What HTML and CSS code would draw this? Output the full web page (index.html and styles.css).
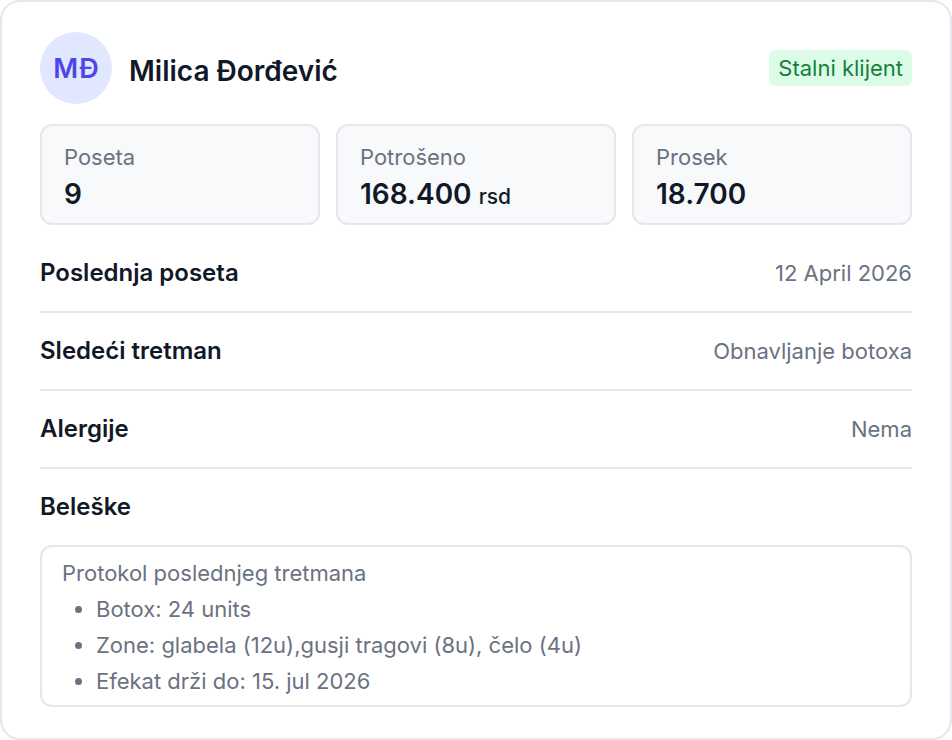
FILE: index.html
```html
<!DOCTYPE html>
<html lang="sr">
<head>
<meta charset="utf-8">
<title>Klijent</title>
<link rel="stylesheet" href="styles.css">
</head>
<body>
<div class="card">
  <div class="header">
    <div class="who">
      <div class="avatar">MĐ</div>
      <div class="name">Milica Đorđević</div>
    </div>
    <span class="badge">Stalni klijent</span>
  </div>
  <div class="stats">
    <div class="stat">
      <div class="stat-label">Poseta</div>
      <div class="stat-value">9</div>
    </div>
    <div class="stat">
      <div class="stat-label">Potrošeno</div>
      <div class="stat-value">168.400 <span class="unit">rsd</span></div>
    </div>
    <div class="stat">
      <div class="stat-label">Prosek</div>
      <div class="stat-value">18.700</div>
    </div>
  </div>
  <div class="row">
    <div class="row-label">Poslednja poseta</div>
    <div class="row-value">12 April 2026</div>
  </div>
  <div class="row">
    <div class="row-label">Sledeći tretman</div>
    <div class="row-value">Obnavljanje botoxa</div>
  </div>
  <div class="row">
    <div class="row-label">Alergije</div>
    <div class="row-value">Nema</div>
  </div>
  <div class="notes">
    <div class="row-label">Beleške</div>
    <div class="notes-box">
      <div class="notes-title">Protokol poslednjeg tretmana</div>
      <ul class="notes-list">
        <li>Botox: 24 units</li>
        <li>Zone: glabela (12u),gusji tragovi (8u), čelo (4u)</li>
        <li>Efekat drži do: 15. jul 2026</li>
      </ul>
    </div>
  </div>
</div>
</body>
</html>
```
FILE: styles.css
```css
* { box-sizing: border-box; }
html, body { margin: 0; padding: 0; background: #ffffff; }
body { font-family: Inter, "Noto Sans", sans-serif; color: #111827; }

.card {
  width: 952px;
  border: 2px solid #e5e7eb;
  border-radius: 20px;
  background: #ffffff;
  padding: 30px 38px 31px;
}

.header {
  display: flex;
  align-items: center;
  justify-content: space-between;
  height: 72px;
}
.who { display: flex; align-items: center; gap: 17px; }
.avatar {
  width: 72px; height: 72px;
  border-radius: 50%;
  background: #e0e7ff;
  color: #4f46e5;
  display: flex; align-items: center; justify-content: center;
  font-size: 27px; font-weight: 600;
}
.name { font-size: 28px; font-weight: 600; color: #111827; padding-top: 6px; }
.badge {
  background: #dcfce7;
  color: #15803d;
  font-size: 22px;
  line-height: 36px;
  height: 36px;
  padding: 0 9px;
  border-radius: 6px;
}

.stats {
  display: grid;
  grid-template-columns: repeat(3, 1fr);
  gap: 16px;
  margin-top: 20px;
  margin-bottom: 10px;
}
.stat {
  height: 101px;
  background: #f8f9fb;
  border: 2px solid #e5e7eb;
  border-radius: 12px;
  padding: 17px 22px 10px;
}
.stat-label { font-size: 22px; line-height: 28px; color: #6b7280; }
.stat-value {
  margin-top: 4px;
  font-size: 28px; line-height: 38px; font-weight: 600; color: #111827;
}
.unit { font-size: 21px; font-weight: 500; }

.row {
  display: flex;
  justify-content: space-between;
  align-items: center;
  padding: 24px 0;
  border-bottom: 2px solid #e5e7eb;
}
.row-label { font-size: 24px; line-height: 28px; font-weight: 600; color: #111827; }
.row-value { font-size: 22px; line-height: 28px; color: #6b7280; }

.notes { padding-top: 24px; }
.notes-box {
  margin-top: 24px;
  height: 162px;
  border: 2px solid #e5e7eb;
  border-radius: 12px;
  padding: 8px 20px;
  color: #6b7280;
  font-size: 22px;
  line-height: 36px;
}
.notes-list { margin: 0; padding-left: 34px; }
```
